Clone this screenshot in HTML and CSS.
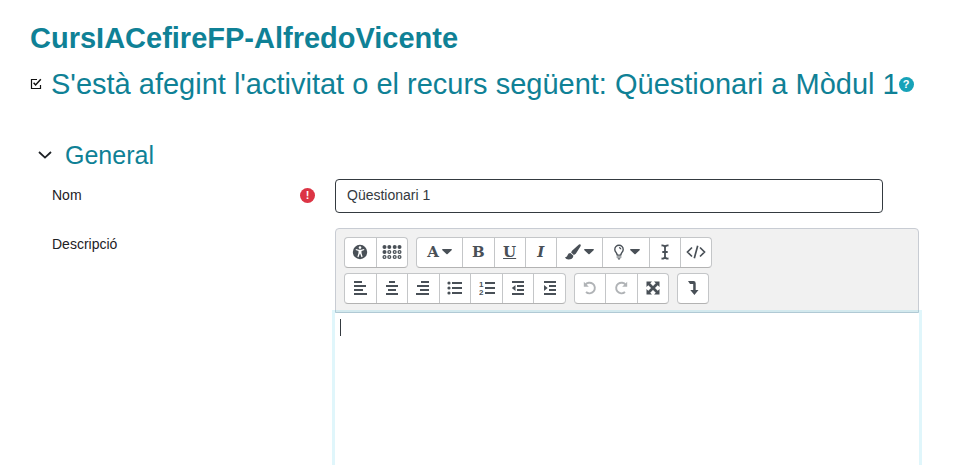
FILE: index.html
```
<!DOCTYPE html>
<html lang="ca">
<head>
<meta charset="utf-8">
<meta name="viewport" content="width=device-width, initial-scale=1">
<title>Qüestionari</title>
<link rel="stylesheet" href="styles.css">
</head>
<body>
<header class="page-header">
  <h1>CursIACefireFP-AlfredoVicente</h1>
  <div class="activity">
    <svg class="activity-icon" viewBox="0 0 12 12" aria-hidden="true"><path d="M7 1.500H1.500v9h9V7" fill="none" stroke="#111" stroke-width="1.200"/><path d="M3.600 4.800l2 2.200 5.200-5.800" fill="none" stroke="#111" stroke-width="1.500"/></svg>
    <h2>S'està afegint l'activitat o el recurs següent: Qüestionari a Mòdul 1</h2>
    <button type="button" class="badge help">?</button>
  </div>
</header>
<main>
  <form>
    <h3 class="section-title">
      <button type="button" class="collapse" aria-label="General"><svg viewBox="0 0 14 8"><path d="M1 1l6 5.600L13 1" fill="none" stroke="#1d2125" stroke-width="1.800"/></svg></button>
      General
    </h3>
    <div class="row">
      <div class="label"><label for="name">Nom</label><span class="badge required">!</span></div>
      <div class="field"><input id="name" class="text-input" type="text" value="Qüestionari 1"></div>
    </div>
    <div class="row row-editor">
      <div class="label"><label for="description">Descripció</label></div>
      <div class="editor">
        <div class="toolbar">
          <div class="toolbar-row">
            <div class="group g2">
              <button type="button" aria-label="Accessibilitat"><svg viewBox="0 0 16 16"><circle cx="8" cy="8" r="7.200"/><g fill="#fff"><circle cx="8" cy="3.600" r="1.300"/><path d="M3.900 5.100l3 .7h2.200l3-.7.2.9-2.800.9v2l1.100 3.900-1.100.4L8.200 9.800h-.4l-1.300 3.400-1.100-.4 1.100-3.900v-2L3.700 6z"/></g></svg></button>
              <button type="button" aria-label="Mostra més botons"><svg class="braille" viewBox="0 0 20 16"><circle cx="2.500" cy="3" r="2"/><circle cx="7.300" cy="3" r="2"/><circle cx="12.700" cy="3" r="2"/><circle cx="17.500" cy="3" r="2"/><circle cx="2.500" cy="8" r="2"/><g fill="none" stroke="#495057" stroke-width="1.300"><circle cx="7.300" cy="8" r="1.400"/><circle cx="12.700" cy="8" r="1.400"/><circle cx="17.500" cy="8" r="1.400"/><circle cx="2.500" cy="13" r="1.400"/><circle cx="7.300" cy="13" r="1.400"/><circle cx="12.700" cy="13" r="1.400"/><circle cx="17.500" cy="13" r="1.400"/></g></svg></button>
            </div>
            <div class="group g8">
              <button type="button" class="wide"><span class="glyph">A</span><svg class="caret" viewBox="0 0 10 6"><path d="M.6 0h8.800q.8.5.2 1.300L5.600 5q-.6.6-1.200 0L.4 1.300Q-.2.5.6 0z"/></svg></button>
              <button type="button"><span class="glyph">B</span></button>
              <button type="button"><span class="glyph under">U</span></button>
              <button type="button"><span class="glyph italic">I</span></button>
              <button type="button" class="wide" aria-label="Color"><svg viewBox="0 0 16 16"><path d="M15.400.5c.7.6.4 1.400 0 2.100L10.800 9.700 8.900 10.900 6.100 8.500 7 6.700 13.400.9c.6-.6 1.400-.9 2-.4zM5.400 9l3 2.700c-.2 2.800-2.500 3.800-4.800 3.800-1.800 0-2.900-.7-3.500-2.500 1.300.3 1.700-.2 2.300-1.400C3.100 9.800 4 9 5.400 9z"/></svg><svg class="caret" viewBox="0 0 10 6"><path d="M.6 0h8.800q.8.5.2 1.300L5.600 5q-.6.6-1.200 0L.4 1.300Q-.2.5.6 0z"/></svg></button>
              <button type="button" class="wide" aria-label="Idea"><svg viewBox="0 0 16 16"><path d="M6.200 11C6 8.700 3.800 8 3.800 5.400a4.200 4.200 0 0 1 8.400 0c0 2.600-2.200 3.300-2.400 5.600M8 3.600q1.700.1 1.800 1.700" fill="none" stroke="#495057" stroke-width="1.400"/><path d="M5.600 10.600h4.800v1.100H5.600zm0 1.900h4.800v1.100H5.600zM6.500 14.200h3L8.800 15.600H7.200z"/></svg><svg class="caret" viewBox="0 0 10 6"><path d="M.6 0h8.800q.8.5.2 1.300L5.600 5q-.6.6-1.200 0L.4 1.300Q-.2.5.6 0z"/></svg></button>
              <button type="button" aria-label="Cursor"><svg viewBox="0 0 16 16"><path d="M4.500 1.500Q8 1.200 8 3.600v8.800q0 2.400-3.500 2.100M11.500 1.500Q8 1.200 8 3.600m0 8.800q0 2.400 3.500 2.100M5.300 8h5.400" fill="none" stroke="#495057" stroke-width="1.800"/></svg></button>
              <button type="button" aria-label="HTML"><svg class="code" viewBox="0 0 20 16"><path d="M6 3.500L1.500 8 6 12.500M14 3.500L18.500 8 14 12.500M11.700 1.800L8.300 14.200" fill="none" stroke="#495057" stroke-width="1.700"/></svg></button>
            </div>
          </div>
          <div class="toolbar-row">
            <div class="group g7">
              <button type="button" aria-label="Esquerra"><svg viewBox="0 0 16 16"><path d="M2 1h8v2H2zm0 4h12v2H2zm0 4h9v2H2zm0 4h13v2H2z"/></svg></button>
              <button type="button" aria-label="Centre"><svg viewBox="0 0 16 16"><path d="M5 1h6v2H5zM2 5h12v2H2zm2 4h8v2H4zm-2 4h12v2H2z"/></svg></button>
              <button type="button" aria-label="Dreta"><svg viewBox="0 0 16 16"><path d="M6 1h8v2H6zM2 5h12v2H2zm3 4h9v2H5zm-4 4h13v2H1z"/></svg></button>
              <button type="button" aria-label="Llista"><svg viewBox="0 0 16 16"><circle cx="2" cy="3" r="1.600"/><circle cx="2" cy="8" r="1.600"/><circle cx="2" cy="13" r="1.600"/><path d="M5 2h10v2H5zm0 5h10v2H5zm0 5h10v2H5z"/></svg></button>
              <button type="button" aria-label="Llista numerada"><svg viewBox="0 0 16 16"><text x="0" y="7" class="tiny">1</text><text x="0" y="15" class="tiny">2</text><path d="M6 2h10v2H6zm0 5h10v2H6zm0 5h10v2H6z"/></svg></button>
              <button type="button" aria-label="Redueix el sagnat"><svg viewBox="0 0 16 16"><path d="M2 1h12v2H2zm5 4h7v2H7zm0 4h7v2H7zm-5 4h12v2H2zM5.500 5v6L1.800 8z"/></svg></button>
              <button type="button" aria-label="Augmenta el sagnat"><svg viewBox="0 0 16 16"><path d="M2 1h12v2H2zm5 4h7v2H7zm0 4h7v2H7zm-5 4h12v2H2zM2 5v6l3.700-3z"/></svg></button>
            </div>
            <div class="group g3">
              <button type="button" aria-label="Desfés" class="muted"><svg viewBox="0 0 16 16"><path d="M3.200 5A5.300 5.300 0 1 1 4 12" fill="none" stroke="#b0b3b6" stroke-width="1.900"/><path d="M1.800 1.800v5h5z"/></svg></button>
              <button type="button" aria-label="Refés" class="muted"><svg viewBox="0 0 16 16"><path d="M12.800 5A5.300 5.300 0 1 0 12 12" fill="none" stroke="#b0b3b6" stroke-width="1.900"/><path d="M14.200 1.800v5h-5z"/></svg></button>
              <button type="button" aria-label="Pantalla completa"><svg viewBox="0 0 16 16"><path d="M1.500 1.500h5.500L1.500 7zM14.500 1.500V7L9 1.500zM1.500 14.500V9L7 14.500zM14.500 14.500H9L14.500 9z"/><path d="M3 3l10 10M13 3L3 13" stroke="#495057" stroke-width="2.800"/></svg></button>
            </div>
            <div class="group g1">
              <button type="button" aria-label="Insereix"><svg viewBox="0 0 16 16"><path d="M3 1h5.500q2.200 0 2.200 2.200V10H13.500L9.400 15 5.300 10H8.200V4H5z"/></svg></button>
            </div>
          </div>
        </div>
        <div class="content">
          <textarea id="description"></textarea>
          <span class="cursor"></span>
        </div>
      </div>
    </div>
  </form>
</main>
</body>
</html>
```
FILE: styles.css
```
* { box-sizing: border-box; }
body {
  margin: 0;
  min-height: 100vh;
  display: flex;
  flex-direction: column;
  padding: 20px 40px 0 30px;
  background: #fff;
  color: #1d2125;
  font: 14px/20px "Liberation Sans", Arial, sans-serif;
}
h1, h2, h3 { margin: 0; color: #0f8196; }
h1 { font-size: 29px; line-height: 36px; }
h2 { font-size: 29px; line-height: 36px; font-weight: 400; white-space: nowrap; }
button { font: inherit; color: inherit; border: 0; padding: 0; background: none; }
svg { display: block; fill: #495057; }
.activity { display: flex; align-items: center; margin-top: 10px; }
.activity-icon { width: 12px; height: 12px; margin-right: 9px; flex: none; }
.badge {
  display: block;
  flex: none;
  width: 15px;
  height: 15px;
  border-radius: 50%;
  color: #fff;
  font-weight: 700;
  font-size: 11px;
  line-height: 15px;
  text-align: center;
}
.help { background: #17a2b8; }
.required { background: #dc3545; }
main, form { flex: 1; display: flex; flex-direction: column; }
.section-title {
  display: flex;
  align-items: center;
  gap: 13px;
  margin-top: 38px;
  padding-left: 8px;
  font-size: 25px;
  line-height: 30px;
  font-weight: 400;
}
.collapse svg { width: 14px; height: 8px; }
.row {
  display: grid;
  grid-template-columns: 283px 1fr;
  margin: 9px 0 0 22px;
}
.row-editor { flex: 1; margin-top: 15px; }
.label {
  display: flex;
  justify-content: space-between;
  align-items: center;
  height: 32px;
  padding-right: 20px;
}
.field { padding-right: 36px; }
.text-input {
  display: block;
  width: 100%;
  height: 34px;
  padding: 0 11px 2px;
  border: 1px solid #343a40;
  border-radius: 4px;
  font: inherit;
  color: #343a40;
}
.editor { display: flex; flex-direction: column; }
.toolbar {
  display: flex;
  flex-direction: column;
  gap: 5px;
  padding: 8px;
  background: #f1f1f1;
  border: 1px solid #c8ccd3;
  border-radius: 4px 4px 0 0;
}
.toolbar-row { display: flex; gap: 8px; }
.group {
  display: flex;
  height: 31px;
  background: #fff;
  border: 1px solid #c4c6c8;
  border-bottom-color: #b3b3b3;
  border-radius: 4px;
}
.g1 { width: 32px; }
.g2 { width: 64px; }
.g3 { width: 95px; }
.g7 { width: 222px; }
.g8 { width: 296px; }
.group button {
  flex: 2 1 0;
  display: flex;
  align-items: center;
  justify-content: center;
  padding-bottom: 1px;
  color: #495057;
}
.group button + button { border-left: 1px solid #c4c6c8; }
.group .wide { flex-grow: 3; gap: 3px; }
.group svg { width: 16px; height: 16px; flex: none; }
.group .braille, .group .code { width: 20px; }
.group .caret { width: 10px; height: 6px; }
.group .muted svg { fill: #b0b3b6; }
.glyph { font: bold 15px/20px "DejaVu Serif", serif; }
.under { text-decoration: underline; }
.italic { font-style: italic; }
.tiny { font: bold 8px "Liberation Sans", sans-serif; }
.content {
  position: relative;
  flex: 1;
  display: flex;
  min-height: 120px;
  box-shadow: 0 0 0 3px rgba(15, 185, 225, .13);
}
.content textarea {
  flex: 1;
  border: 0;
  padding: 4px;
  resize: none;
  outline: 0;
  background: #fff;
  font: inherit;
}
.cursor {
  position: absolute;
  left: 5px;
  top: 6px;
  width: 1px;
  height: 17px;
  background: #343a40;
}
```
